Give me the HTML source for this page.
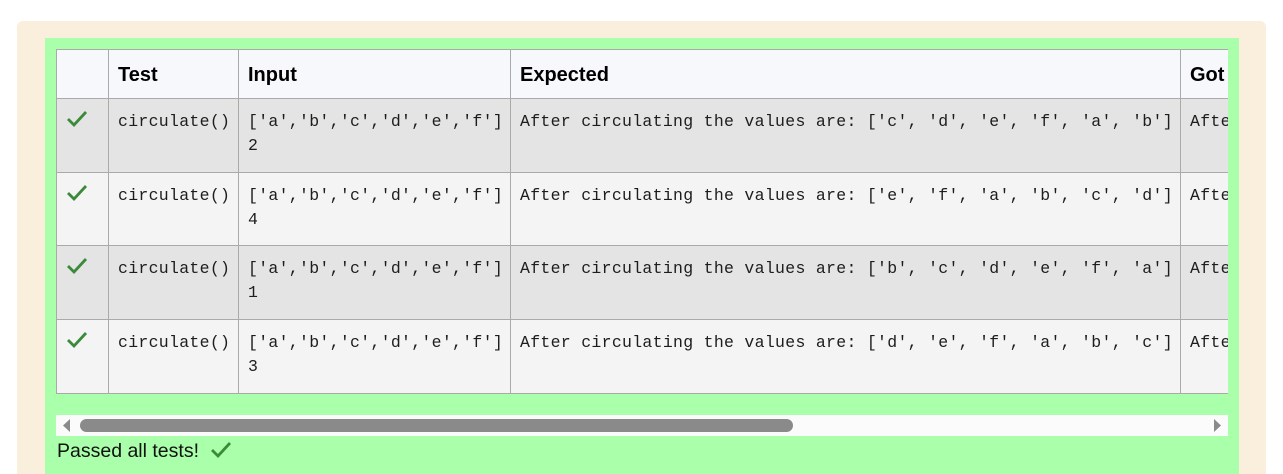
<!DOCTYPE html>
<html style="overflow:hidden;height:474px"><head><style>
body{margin:0;width:1283px;height:474px;background:#fff;overflow:hidden;position:relative;font-family:"Liberation Sans",sans-serif;}
.outer{position:absolute;left:17px;top:21px;width:1249px;height:470px;background:#faeedd;border-radius:6px;}
.green{position:absolute;left:45px;top:38px;width:1194px;height:440px;background:#aaffaa;}
.clip{position:absolute;left:56px;top:49px;width:1172px;height:346px;overflow:hidden;}
table{border-collapse:collapse;position:absolute;left:0;top:0;table-layout:fixed;width:1325px;}
td,th{border:1px solid #aaa;padding:0 9px;vertical-align:top;text-align:left;overflow:hidden;}
th{height:49px;box-sizing:border-box;background:#f7f8fc;font-size:20px;font-weight:bold;vertical-align:middle;color:#000;padding-top:2px;}
td{height:73.7px;font-family:"Liberation Mono",monospace;font-size:16.5px;letter-spacing:0.3px;line-height:24px;padding-top:11px;box-sizing:border-box;color:#1d1d1d;white-space:pre;}
tr.a td{background:#e4e4e4}tr.b td{background:#f4f4f4}
.sb{position:absolute;left:56px;top:415px;width:1172px;height:21px;background:#fbfbfb;}
.thumb{position:absolute;left:24px;top:4px;width:713px;height:13px;background:#8a8a8a;border-radius:7px;}
.pass{position:absolute;left:57px;top:440px;font-size:19.5px;color:#111;}
</style></head><body>
<div class="outer"></div>
<div class="green"></div>
<div class="clip"><table>
<colgroup><col style="width:52px"><col style="width:130px"><col style="width:272px"><col style="width:670px"><col style="width:201px"></colgroup>
<tr><th></th><th>Test</th><th>Input</th><th>Expected</th><th>Got</th></tr>
<tr class="a"><td><svg width="22" height="18" viewBox="0 0 22 18"><path d="M2 9l6 6L20 2" stroke="#3a8a3a" stroke-width="2.8" fill="none"/></svg></td><td>circulate()</td><td>['a','b','c','d','e','f']
2</td><td>After circulating the values are: ['c', 'd', 'e', 'f', 'a', 'b']</td><td>After</td></tr>
<tr class="b"><td><svg width="22" height="18" viewBox="0 0 22 18"><path d="M2 9l6 6L20 2" stroke="#3a8a3a" stroke-width="2.8" fill="none"/></svg></td><td>circulate()</td><td>['a','b','c','d','e','f']
4</td><td>After circulating the values are: ['e', 'f', 'a', 'b', 'c', 'd']</td><td>After</td></tr>
<tr class="a"><td><svg width="22" height="18" viewBox="0 0 22 18"><path d="M2 9l6 6L20 2" stroke="#3a8a3a" stroke-width="2.8" fill="none"/></svg></td><td>circulate()</td><td>['a','b','c','d','e','f']
1</td><td>After circulating the values are: ['b', 'c', 'd', 'e', 'f', 'a']</td><td>After</td></tr>
<tr class="b"><td><svg width="22" height="18" viewBox="0 0 22 18"><path d="M2 9l6 6L20 2" stroke="#3a8a3a" stroke-width="2.8" fill="none"/></svg></td><td>circulate()</td><td>['a','b','c','d','e','f']
3</td><td>After circulating the values are: ['d', 'e', 'f', 'a', 'b', 'c']</td><td>After</td></tr>
</table></div>
<div class="sb"><svg style="position:absolute;left:6px;top:4px" width="10" height="13"><path d="M8 0L1 6.5L8 13Z" fill="#8a8a8a"/></svg><div class="thumb"></div><svg style="position:absolute;right:6px;top:4px" width="10" height="13"><path d="M2 0L9 6.5L2 13Z" fill="#8a8a8a"/></svg></div>
<div class="pass">Passed all tests! <svg style="margin-left:6px;vertical-align:-2px" width="22" height="18" viewBox="0 0 22 18"><path d="M2 9l6 6L20 2" stroke="#3a8a3a" stroke-width="2.8" fill="none"/></svg></div>
</body></html>
